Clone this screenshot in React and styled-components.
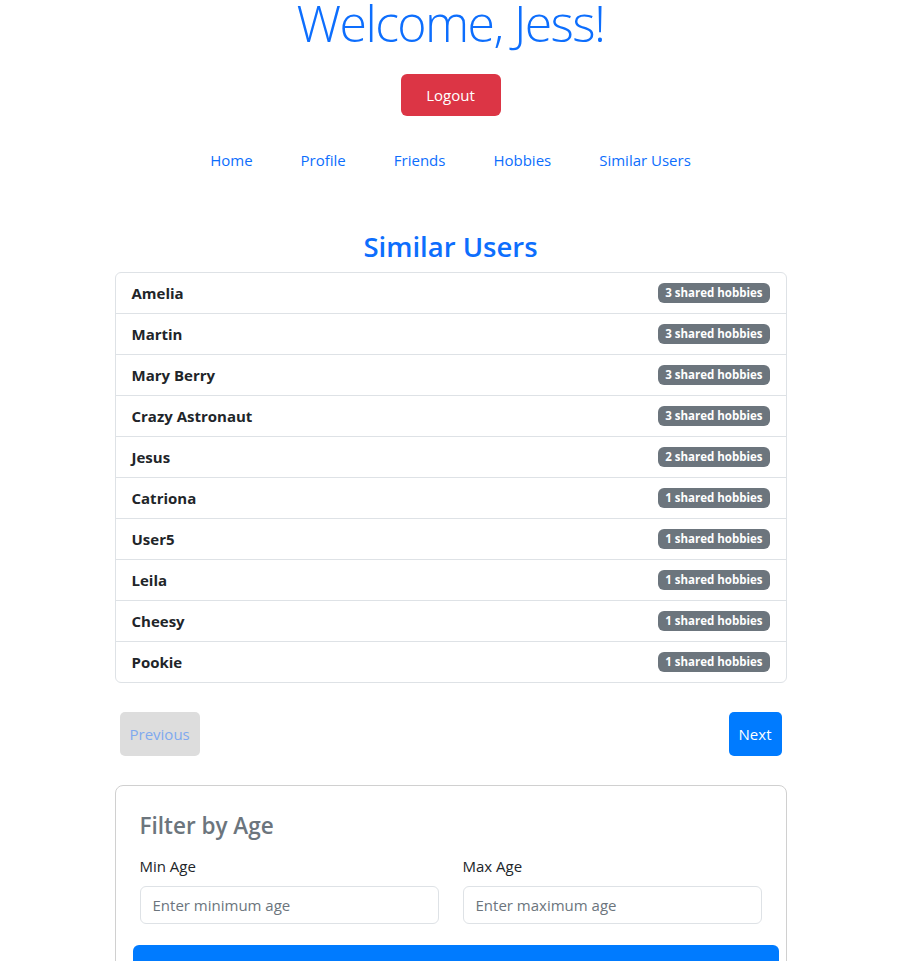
import React from "react";
import styled, { createGlobalStyle } from "styled-components";

const Global = createGlobalStyle`
  html, body { margin: 0; padding: 0; background: #fff; }
  body {
    font-family: "Open Sans", "Noto Sans", "Liberation Sans", sans-serif;
    font-size: 15px;
    line-height: 24px;
    color: #212529;
  }
  * { box-sizing: border-box; }
`;

const Page = styled.div`
  display: flex;
  flex-direction: column;
  align-items: center;
`;

const Title = styled.h1`
  margin: -7px 0 0;
  font-size: 50px;
  font-weight: 300;
  line-height: 60px;
  letter-spacing: -1.6px;
  color: #0d6efd;
  text-align: center;
`;

const LogoutButton = styled.button`
  margin-top: 21px;
  width: 100px;
  height: 42px;
  padding: 0;
  border: none;
  border-radius: 6px;
  background: #dc3545;
  color: #fff;
  font-family: inherit;
  font-size: 15px;
  cursor: pointer;
`;

const Nav = styled.nav`
  display: flex;
  justify-content: center;
  margin-top: 24px;
`;

const NavLink = styled.a`
  padding: 8px 24px;
  color: #0d6efd;
  text-decoration: none;
  font-size: 15px;
  line-height: 24px;
`;

const Container = styled.main`
  width: 672px;
  display: flex;
  flex-direction: column;
`;

const SectionTitle = styled.h2`
  margin: 50px 0 8px;
  font-size: 27.5px;
  font-weight: 600;
  line-height: 34px;
  color: #0d6efd;
  text-align: center;
`;

const List = styled.ul`
  list-style: none;
  margin: 0;
  padding: 0;
  border: 1px solid #dee2e6;
  border-radius: 6px;
`;

const Item = styled.li`
  display: flex;
  align-items: center;
  justify-content: space-between;
  padding: 8px 16px;
  line-height: 24px;
  & + & { border-top: 1px solid #dee2e6; }
`;

const Name = styled.span`
  font-weight: 700;
  color: #212529;
`;

const Badge = styled.span`
  display: inline-flex;
  align-items: center;
  height: 20px;
  padding: 0 7px;
  border-radius: 6px;
  background: #6c757d;
  color: #fff;
  font-size: 11.5px;
  font-weight: 700;
  line-height: 1;
`;

const Pager = styled.div`
  display: flex;
  justify-content: space-between;
  padding: 0 5px;
  margin-top: 29px;
`;

const PageButton = styled.button`
  height: 44px;
  padding: 0 10px;
  border: none;
  border-radius: 5px;
  font-family: inherit;
  font-size: 15px;
  background: ${(p) => (p.disabled ? "#dddddd" : "#007bff")};
  color: ${(p) => (p.disabled ? "#7fa9ef" : "#ffffff")};
`;

const Card = styled.section`
  margin-top: 29px;
  border: 1px solid #d0d0d0;
  border-radius: 8px;
  padding: 24px;
`;

const CardTitle = styled.h4`
  margin: 2px 0 14px;
  font-size: 22.5px;
  font-weight: 600;
  line-height: 28px;
  color: #6c757d;
`;

const FieldRow = styled.div`
  display: grid;
  grid-template-columns: 1fr 1fr;
  gap: 24px;
`;

const Field = styled.div`
  display: flex;
  flex-direction: column;
`;

const Label = styled.label`
  margin-bottom: 8px;
  font-size: 15px;
  line-height: 24px;
  color: #212529;
`;

const Input = styled.input`
  height: 38px;
  padding: 0 12px;
  border: 1px solid #dee2e6;
  border-radius: 6px;
  font-family: inherit;
  font-size: 15px;
  color: #212529;
  &::placeholder { color: #6c757d; }
`;

const ApplyButton = styled.button`
  display: block;
  width: calc(100% + 24px);
  margin: 21px 0 0 -7px;
  padding: 16px 12px;
  border: none;
  border-radius: 6px;
  background: #007bff;
  color: #fff;
  font-family: inherit;
  font-size: 15px;
  line-height: 24px;
`;

const users = [
  ["Amelia", 3],
  ["Martin", 3],
  ["Mary Berry", 3],
  ["Crazy Astronaut", 3],
  ["Jesus", 2],
  ["Catriona", 1],
  ["User5", 1],
  ["Leila", 1],
  ["Cheesy", 1],
  ["Pookie", 1],
];

export default function App() {
  return (
    <Page>
      <Global />
      <Title>Welcome, Jess!</Title>
      <LogoutButton>Logout</LogoutButton>
      <Nav>
        {["Home", "Profile", "Friends", "Hobbies", "Similar Users"].map((l) => (
          <NavLink key={l} href="#">{l}</NavLink>
        ))}
      </Nav>
      <Container>
        <SectionTitle>Similar Users</SectionTitle>
        <List>
          {users.map(([n, c]) => (
            <Item key={n}>
              <Name>{n}</Name>
              <Badge>{c} shared hobbies</Badge>
            </Item>
          ))}
        </List>
        <Pager>
          <PageButton disabled>Previous</PageButton>
          <PageButton>Next</PageButton>
        </Pager>
        <Card>
          <CardTitle>Filter by Age</CardTitle>
          <FieldRow>
            <Field>
              <Label>Min Age</Label>
              <Input placeholder="Enter minimum age" />
            </Field>
            <Field>
              <Label>Max Age</Label>
              <Input placeholder="Enter maximum age" />
            </Field>
          </FieldRow>
          <ApplyButton>Apply Filter</ApplyButton>
        </Card>
      </Container>
    </Page>
  );
}
